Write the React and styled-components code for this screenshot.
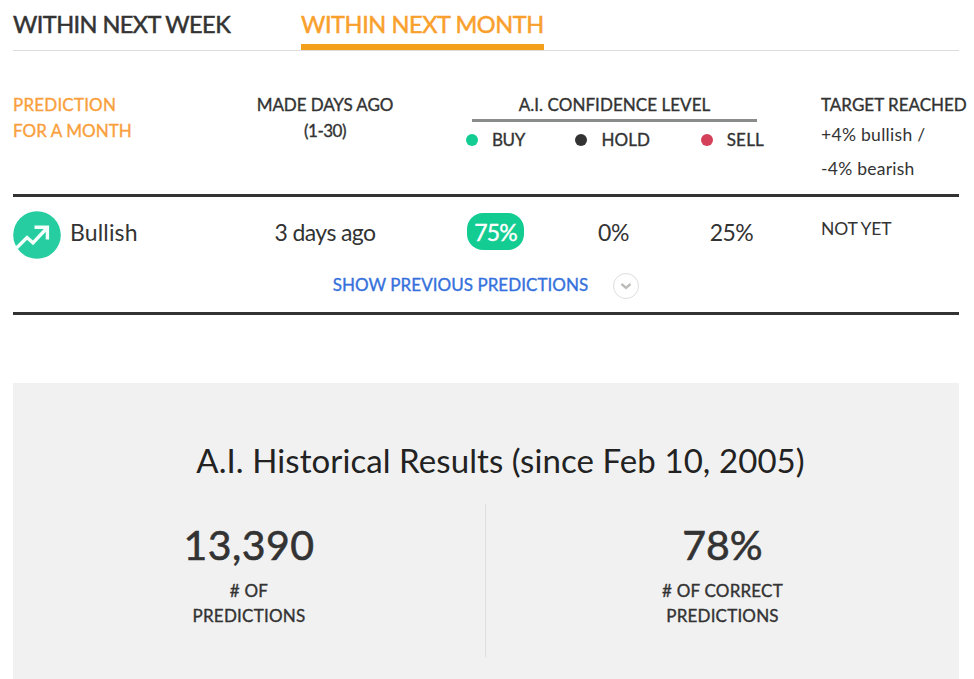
import React from "react";
import styled, { createGlobalStyle } from "styled-components";

const GlobalStyle = createGlobalStyle`
  * {
    box-sizing: border-box;
  }
  body {
    margin: 0;
    overflow: hidden;
    background-color: #ffffff;
    color: #333333;
    font-family: Lato, "Open Sans", sans-serif;
  }
`;
const Page = styled.div`
  width: 974px;
  height: 679px;
  padding: 0 15px 0 13px;
  overflow: hidden;
`;
const Tabs = styled.div`
  display: flex;
  align-items: flex-start;
  gap: 70px;
  height: 51px;
  border-bottom: 1px solid #dcdcdc;
`;
const Tab = styled.div`
  width: ${(props) => props.$width}px;
  height: 50px;
  padding-top: 5px;
  font-size: 23.5px;
  line-height: 39px;
  -webkit-text-stroke: 0.5px currentColor;
  letter-spacing: ${(props) => props.$spacing}px;
  white-space: nowrap;
  color: ${(props) => (props.$active ? "#f9a02c" : "#333333")};
  border-bottom: ${(props) => (props.$active ? "6px solid #f3a11c" : "none")};
`;
const Row = styled.div`
  display: grid;
  grid-template-columns: 180px 264px 364px 1fr;
`;
const HeadRow = styled(Row)`
  height: 146px;
  padding-top: 41px;
  border-bottom: 3px solid #333333;
`;
const Label = styled.div`
  font-size: 17px;
  line-height: 26px;
  -webkit-text-stroke: 0.35px currentColor;
  letter-spacing: ${(props) => props.$spacing || 0}px;
  white-space: nowrap;
  text-align: ${(props) => (props.$center ? "center" : "left")};
  color: ${(props) => props.$color || "#333333"};
`;
const Confidence = styled.div`
  width: 315px;
  padding: 0 9px;
`;
const ConfidenceTitle = styled(Label)`
  height: 30px;
  margin: 0 6px;
  text-align: center;
  border-bottom: 3px solid #8a8c8c;
`;
const Legend = styled.div`
  display: flex;
  justify-content: space-between;
  align-items: center;
  width: 298px;
  margin-top: 5px;
`;
const LegendItem = styled.div`
  display: flex;
  align-items: center;
  gap: 14px;
`;
const Dot = styled.div`
  width: 12px;
  height: 12px;
  border-radius: 50%;
  background-color: ${(props) => props.$color};
`;
const TargetNote = styled.div`
  font-size: 17.5px;
  line-height: 34px;
  letter-spacing: ${(props) => props.$spacing}px;
  white-space: nowrap;
`;
const Body = styled.div`
  height: 118px;
  border-bottom: 3px solid #333333;
`;
const BodyRow = styled(Row)`
  height: 65px;
  padding-top: 14px;
`;
const Trend = styled.div`
  display: flex;
  gap: 9px;
`;
const Value = styled.div`
  font-size: 23px;
  line-height: 42px;
  letter-spacing: ${(props) => props.$spacing || 0}px;
  white-space: nowrap;
  text-align: ${(props) => (props.$center ? "center" : "left")};
`;
const Levels = styled.div`
  display: grid;
  grid-template-columns: 58px 177px 59px;
  width: 315px;
  padding-left: 10px;
`;
const Pill = styled.div`
  width: 57px;
  height: 37px;
  margin-top: 2px;
  border-radius: 16px;
  background-color: #12cc91;
  color: #ffffff;
  font-size: 23px;
  line-height: 38px;
  -webkit-text-stroke: 0.4px currentColor;
  letter-spacing: -0.8px;
  text-align: center;
`;
const NotYet = styled.div`
  font-size: 17.5px;
  line-height: 36px;
  letter-spacing: -0.2px;
`;
const More = styled.div`
  display: flex;
  align-items: center;
  justify-content: center;
  gap: 25px;
  height: 26px;
  margin-top: 11px;
`;
const MoreLabel = styled(Label)`
  height: 29px;
`;
const Toggle = styled.div`
  display: flex;
  align-items: center;
  justify-content: center;
  width: 26px;
  height: 26px;
  border: 1px solid #dddddd;
  border-radius: 50%;
`;
const Results = styled.div`
  height: 296px;
  margin-top: 68px;
  padding-top: 55px;
  background-color: #f1f1f1;
`;
const ResultsTitle = styled.div`
  padding-left: 29px;
  font-size: 33px;
  line-height: 44px;
  letter-spacing: 0.08px;
  text-align: center;
  white-space: nowrap;
  color: #222222;
`;
const Stats = styled.div`
  display: grid;
  grid-template-columns: 473px 1fr;
  height: 153px;
  margin-top: 22px;
`;
const Stat = styled.div`
  padding-top: 13px;
  border-right: ${(props) => (props.$divider ? "1px solid #dedede" : "none")};
`;
const StatNumber = styled.div`
  height: 61px;
  font-size: 41px;
  line-height: 56px;
  -webkit-text-stroke: 0.6px currentColor;
  letter-spacing: ${(props) => props.$spacing}px;
  text-align: center;
`;
const StatLabel = styled(Label)`
  line-height: 25px;
`;

const legend = [
  { name: "BUY", color: "#13cc93", spacing: -0.4 },
  { name: "HOLD", color: "#333333", spacing: 0.1 },
  { name: "SELL", color: "#d4405a", spacing: 0.2 },
];

const TrendIcon = () => (
  <svg width="48" height="48" viewBox="0 0 48 48">
    <circle cx="24" cy="24" r="23.8" fill="#26cda0" />
    <path
      d="M3.5 37L14 26.5L20 31.8L34 17M21.5 16.2H34.4V28.5"
      fill="none"
      stroke="#f2fffa"
      strokeWidth="3.4"
    />
  </svg>
);

const App = () => {
  return (
    <Page>
      <GlobalStyle />
      <Tabs>
        <Tab $width={218} $spacing={-0.55}>
          WITHIN NEXT WEEK
        </Tab>
        <Tab $active $width={243} $spacing={-0.4}>
          WITHIN NEXT MONTH
        </Tab>
      </Tabs>
      <HeadRow>
        <div>
          <Label $color="#f9a03c" $spacing={0.2}>
            PREDICTION
          </Label>
          <Label $color="#f9a03c" $spacing={0.05}>
            FOR A MONTH
          </Label>
        </div>
        <div>
          <Label $center $spacing={-0.1}>
            MADE DAYS AGO
          </Label>
          <Label $center $spacing={-0.5}>
            (1-30)
          </Label>
        </div>
        <Confidence>
          <ConfidenceTitle $spacing={0.05}>A.I. CONFIDENCE LEVEL</ConfidenceTitle>
          <Legend>
            {legend.map((item) => (
              <LegendItem key={item.name}>
                <Dot $color={item.color} />
                <Label $spacing={item.spacing}>{item.name}</Label>
              </LegendItem>
            ))}
          </Legend>
        </Confidence>
        <div>
          <Label>TARGET REACHED</Label>
          <TargetNote $spacing={0.3}>+4% bullish /</TargetNote>
          <TargetNote $spacing={0.25}>-4% bearish</TargetNote>
        </div>
      </HeadRow>
      <Body>
        <BodyRow>
          <Trend>
            <TrendIcon />
            <Value $spacing={0.15}>Bullish</Value>
          </Trend>
          <Value $center $spacing={-0.6}>
            3 days ago
          </Value>
          <Levels>
            <Pill>75%</Pill>
            <Value $center $spacing={-0.5}>
              0%
            </Value>
            <Value $center $spacing={-0.6}>
              25%
            </Value>
          </Levels>
          <NotYet>NOT YET</NotYet>
        </BodyRow>
        <More>
          <MoreLabel $color="#3571dc" $spacing={0.05}>
            SHOW PREVIOUS PREDICTIONS
          </MoreLabel>
          <Toggle>
            <svg width="12" height="8" viewBox="0 0 12 8">
              <path
                d="M1.5 2L6 6L10.5 2"
                fill="none"
                stroke="#bcbcb8"
                strokeWidth="2.4"
              />
            </svg>
          </Toggle>
        </More>
      </Body>
      <Results>
        <ResultsTitle>A.I. Historical Results (since Feb 10, 2005)</ResultsTitle>
        <Stats>
          <Stat $divider>
            <StatNumber $spacing={0.5}>13,390</StatNumber>
            <StatLabel $center $spacing={0.25}>
              # OF
              <br />
              PREDICTIONS
            </StatLabel>
          </Stat>
          <Stat>
            <StatNumber $spacing={0}>78%</StatNumber>
            <StatLabel $center $spacing={0.2}>
              # OF CORRECT
              <br />
              PREDICTIONS
            </StatLabel>
          </Stat>
        </Stats>
      </Results>
    </Page>
  );
};

export default App;
